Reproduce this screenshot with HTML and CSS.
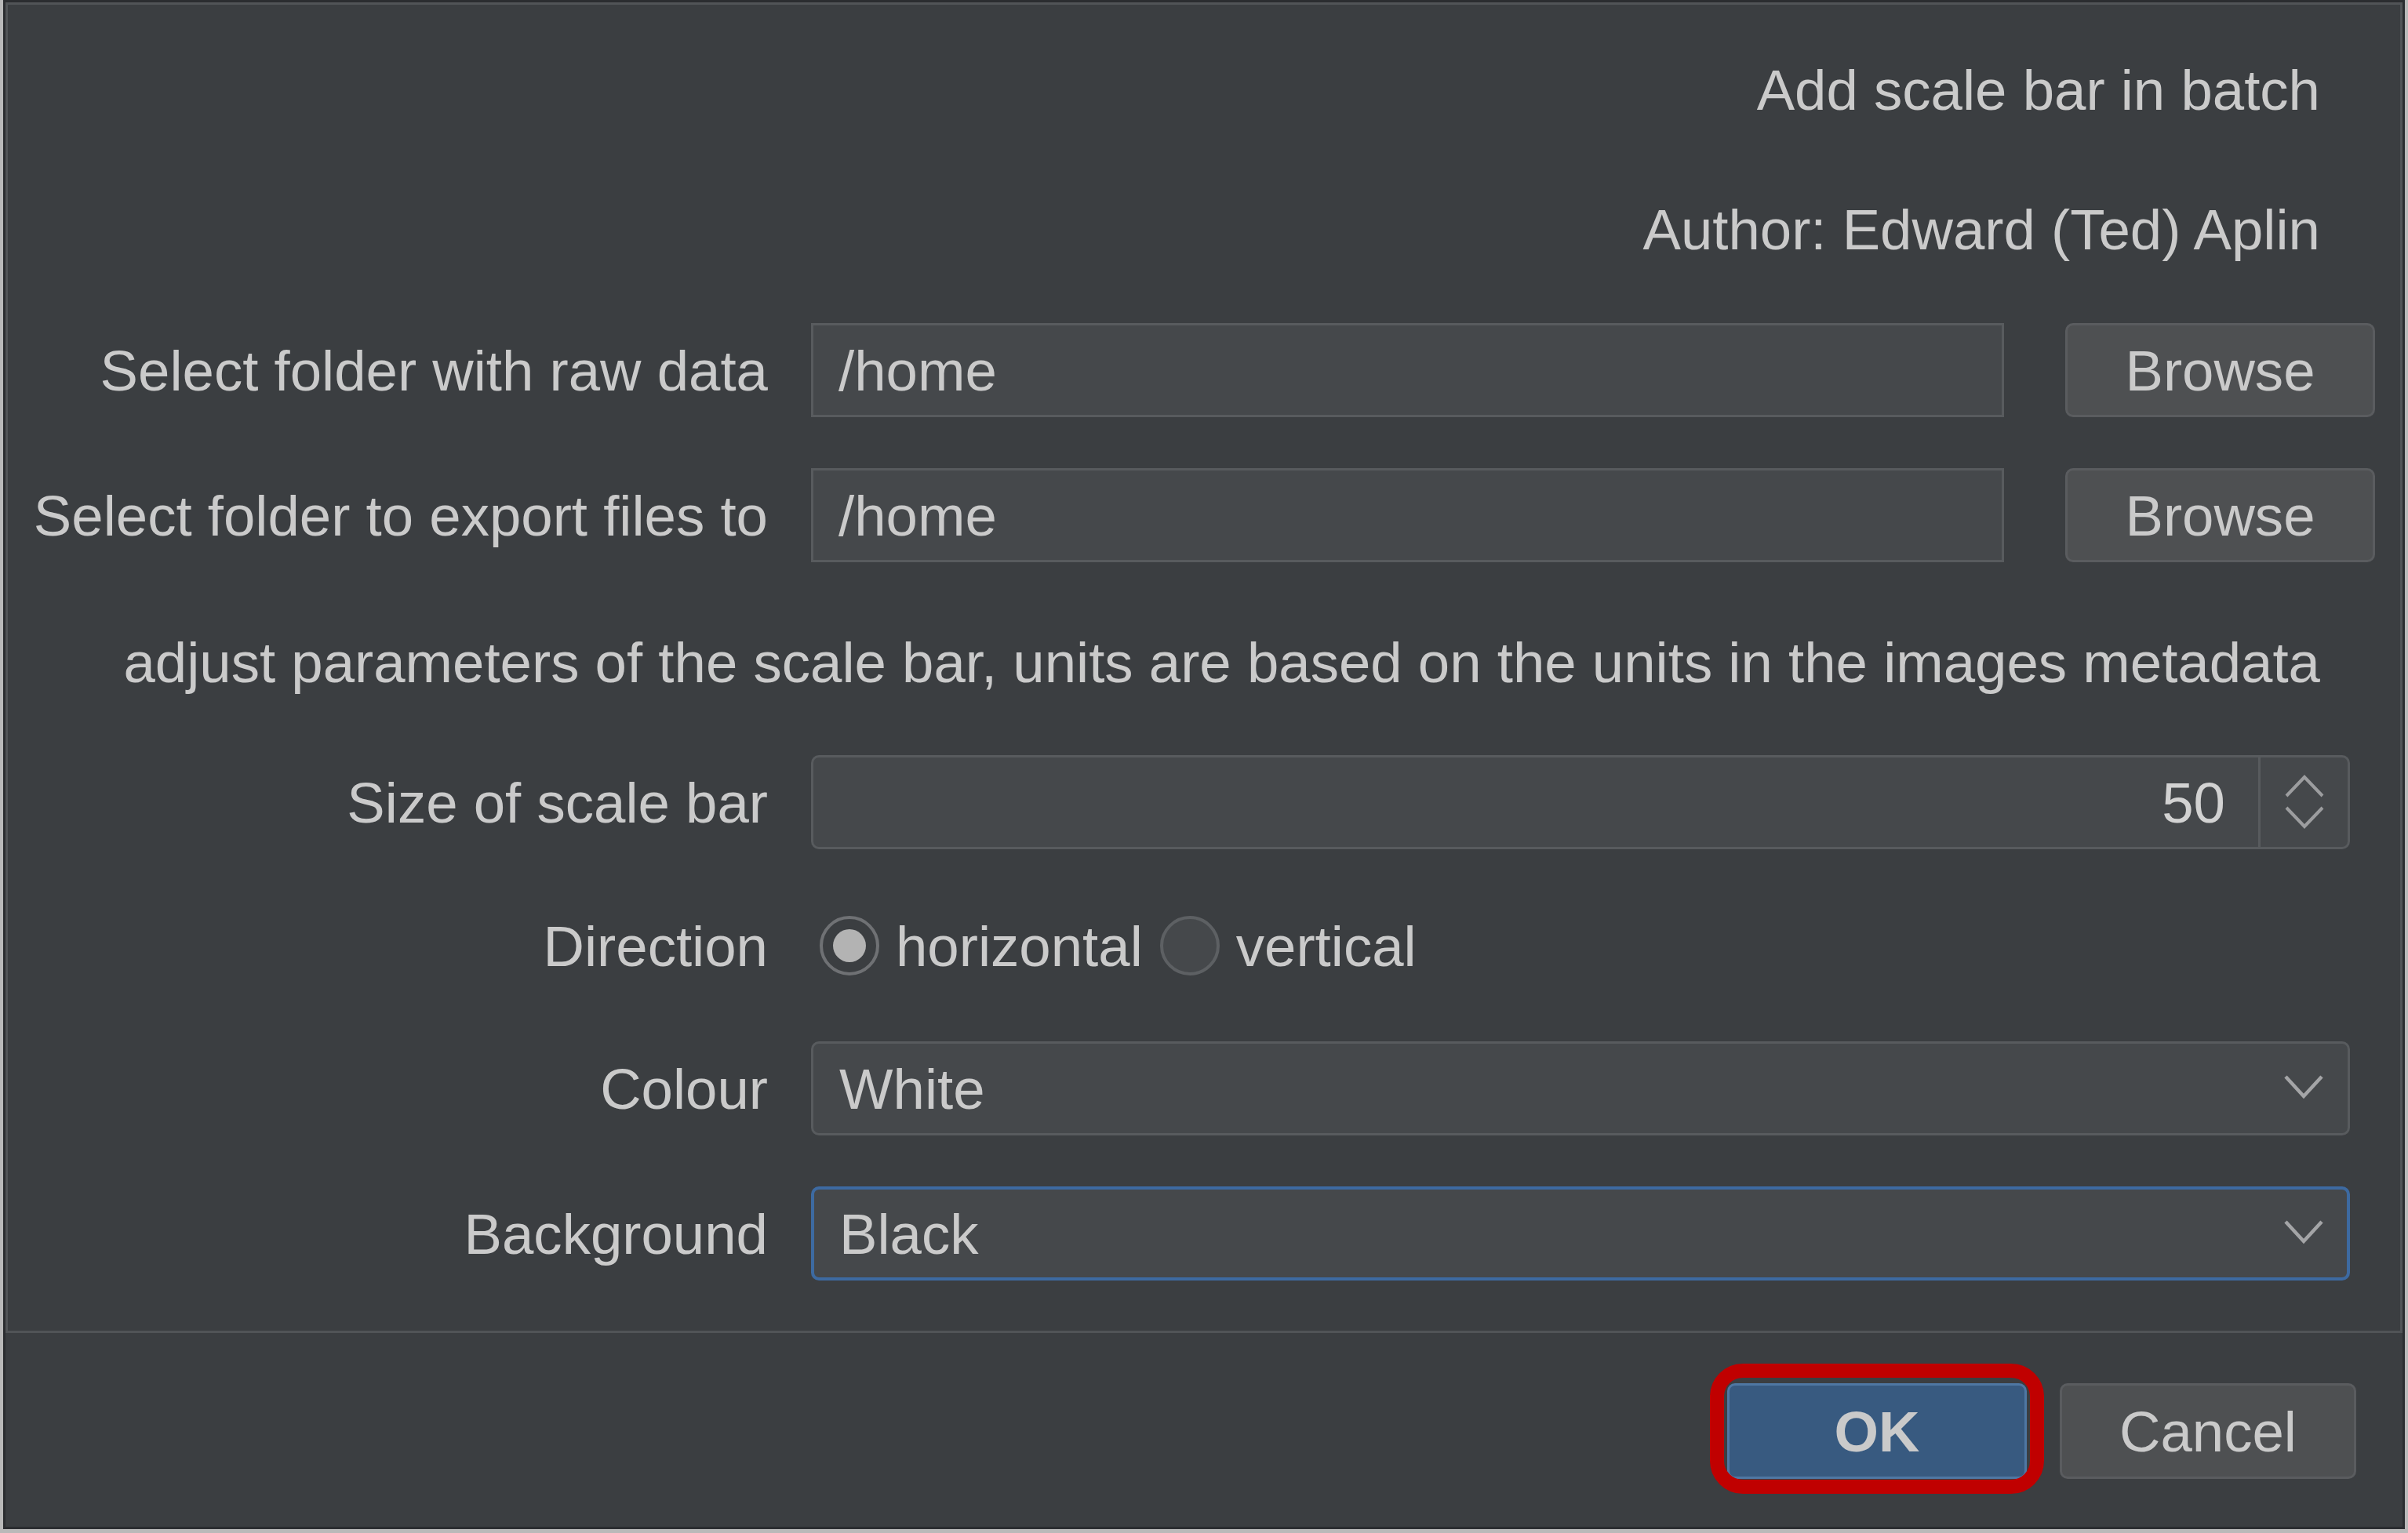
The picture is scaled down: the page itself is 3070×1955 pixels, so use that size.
FILE: index.html
```html
<!DOCTYPE html>
<html lang="en">
<head>
<meta charset="utf-8">
<title>Add scale bar in batch</title>
<link rel="stylesheet" href="styles.css">
</head>
<body>
<div class="window">
  <div class="frame">
    <div class="form">
      <div class="wide r1">Add scale bar in batch</div>
      <div class="wide r2">Author: Edward (Ted) Aplin</div>

      <div class="label r3">Select folder with raw data</div>
      <div class="field r3">/home</div>
      <div class="btn browse r3">Browse</div>

      <div class="label r4">Select folder to export files to</div>
      <div class="field r4">/home</div>
      <div class="btn browse r4">Browse</div>

      <div class="wide r5">adjust parameters of the scale bar, units are based on the units in the images metadata</div>

      <div class="label r6">Size of scale bar</div>
      <div class="spin r6">
        <div class="spin-value">50</div>
        <div class="spin-buttons">
          <svg width="52" height="70" viewBox="0 0 52 70">
            <polyline points="3,27 26,3 49,27" fill="none" stroke="#9c9d9f" stroke-width="4"/>
            <polyline points="3,42 26,66 49,42" fill="none" stroke="#9c9d9f" stroke-width="4"/>
          </svg>
        </div>
      </div>

      <div class="label r7">Direction</div>
      <div class="radios r7">
        <span class="radio checked"><span class="dot"></span></span>
        <span class="radio-text first">horizontal</span>
        <span class="radio"></span>
        <span class="radio-text">vertical</span>
      </div>

      <div class="label r8">Colour</div>
      <div class="combo r8">
        <span class="combo-text">White</span>
        <svg class="chev" width="52" height="32" viewBox="0 0 52 32">
          <polyline points="3,3 26,28 49,3" fill="none" stroke="#a4a5a7" stroke-width="4.5"/>
        </svg>
      </div>

      <div class="label r9">Background</div>
      <div class="combo focus r9">
        <span class="combo-text">Black</span>
        <svg class="chev" width="52" height="32" viewBox="0 0 52 32">
          <polyline points="3,3 26,28 49,3" fill="none" stroke="#a4a5a7" stroke-width="4.5"/>
        </svg>
      </div>
    </div>
  </div>
  <div class="buttonbar">
    <div class="btn ok">OK</div>
    <div class="btn cancel">Cancel</div>
  </div>
</div>
</body>
</html>
```
FILE: styles.css
```css
html, body {
  margin: 0;
  padding: 0;
}
body {
  background: #b9b9b9;
  padding: 0 4px 5px 4px;
  width: 3070px;
  height: 1955px;
  box-sizing: border-box;
  overflow: hidden;
  font-family: "Liberation Sans", Arial, sans-serif;
  font-size: 72.6px;
  color: #cacaca;
}
.window {
  background: #3b3e41;
  border: 3px solid #2b2d30;
  height: 1950px;
  box-sizing: border-box;
  display: flex;
  flex-direction: column;
}
.frame {
  border: 3px solid #515457;
  padding: 48px 0 64px 0;
}
.form {
  display: grid;
  grid-template-columns: 969px 55px 1521px 78px 395px;
  grid-template-rows:
    120px 58px 120px 60px 120px 65px 120px 67px 120px
    59px 120px 63px 120px 62px 120px 65px 120px;
}
.r1 { grid-row: 1; }
.r2 { grid-row: 3; }
.r3 { grid-row: 5; }
.r4 { grid-row: 7; }
.r5 { grid-row: 9; }
.r6 { grid-row: 11; }
.r7 { grid-row: 13; }
.r8 { grid-row: 15; }
.r9 { grid-row: 17; }
.wide {
  grid-column: 1 / -1;
  display: flex;
  align-items: center;
  justify-content: flex-end;
  padding-right: 70px;
  white-space: nowrap;
}
.label {
  grid-column: 1;
  display: flex;
  align-items: center;
  justify-content: flex-end;
  white-space: nowrap;
}
.field {
  grid-column: 3;
  background: #45484b;
  border: 3px solid #585b5e;
  box-sizing: border-box;
  display: flex;
  align-items: center;
  padding-left: 32px;
}
.btn {
  background: #4e5052;
  border: 3px solid #5a5c5f;
  border-radius: 10px;
  box-sizing: border-box;
  display: flex;
  align-items: center;
  justify-content: center;
}
.browse {
  grid-column: 5;
}
.spin {
  grid-column: 3 / 6;
  margin-right: 32px;
  background: #45484b;
  border: 3px solid #585b5e;
  border-radius: 10px;
  box-sizing: border-box;
  display: flex;
}
.spin-value {
  flex: 1;
  display: flex;
  align-items: center;
  justify-content: flex-end;
  padding-right: 42px;
  color: #d2d2d2;
}
.spin-buttons {
  width: 111px;
  border-left: 3px solid #585b5e;
  display: flex;
  align-items: center;
  justify-content: center;
}
.radios {
  grid-column: 3 / 6;
  display: flex;
  align-items: center;
  padding-left: 11px;
}
.radio {
  width: 76px;
  height: 76px;
  border-radius: 50%;
  border: 4px solid #5d6063;
  background: #45484b;
  box-sizing: border-box;
  display: flex;
  align-items: center;
  justify-content: center;
  flex: none;
}
.radio.checked {
  border-color: #6f7174;
  background: #3b3e41;
}
.dot {
  width: 42px;
  height: 42px;
  border-radius: 50%;
  background: #b3b3b3;
}
.radio-text {
  margin-left: 21px;
}
.radio-text.first {
  margin-right: 22px;
}
.combo {
  grid-column: 3 / 6;
  margin-right: 32px;
  background: #45484b;
  border: 3px solid #585b5e;
  border-radius: 10px;
  box-sizing: border-box;
  display: flex;
  align-items: center;
  padding-left: 33px;
  padding-right: 30px;
}
.combo.focus {
  border: 4px solid #3d6aa1;
  padding-left: 32px;
  padding-right: 29px;
}
.combo-text {
  flex: 1;
}
.chev {
  display: block;
  margin-top: -4px;
}
.buttonbar {
  flex: 1;
  display: flex;
  justify-content: flex-end;
  align-items: flex-start;
  padding: 64px 59px 0 0;
  gap: 42px;
}
.ok, .cancel {
  height: 122px;
}
.ok {
  width: 382px;
  background: #385a80;
  border-color: #4f77a3;
  font-weight: bold;
  position: relative;
}
.ok::after {
  content: "";
  position: absolute;
  top: -28px;
  bottom: -22px;
  left: -25px;
  right: -25px;
  border: 18px solid #c00000;
  border-radius: 42px;
  pointer-events: none;
}
.cancel {
  width: 378px;
}
```
